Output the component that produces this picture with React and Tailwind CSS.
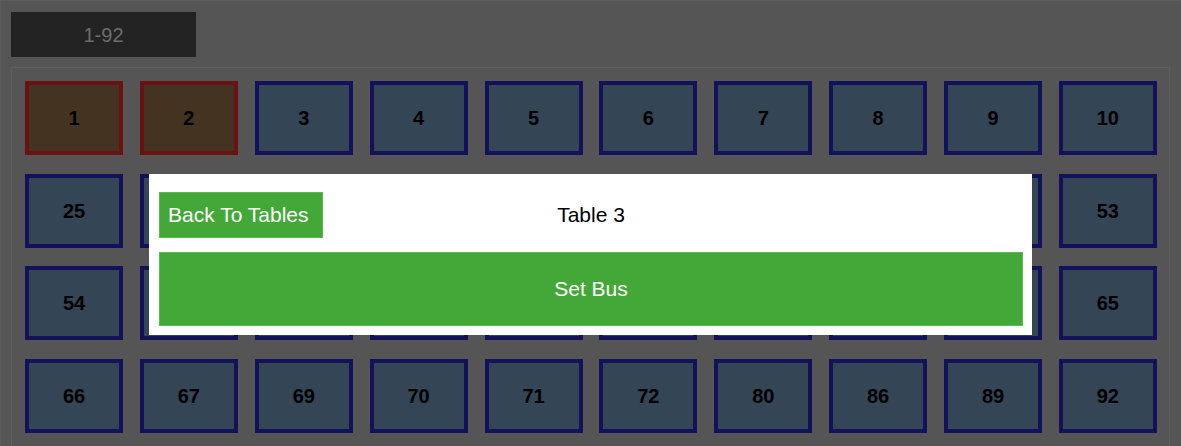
import React from "react";

const rows = [
  [1, 2, 3, 4, 5, 6, 7, 8, 9, 10],
  [25, 26, 27, 28, 29, 30, 31, 32, 33, 53],
  [54, 55, 56, 57, 58, 59, 60, 61, 62, 65],
  [66, 67, 69, 70, 71, 72, 80, 86, 89, 92],
];

// tables that are taken show in red
const busy = [1, 2];

function Tile({ num }) {
  const taken = busy.includes(num);
  return (
    <div
      className={
        "w-[98px] h-[74px] border-4 flex items-center justify-center text-[20px] font-bold text-black " +
        (taken ? "border-[#6a1111] bg-[#453322]" : "border-[#12125a] bg-[#344555]")
      }
    >
      {num}
    </div>
  );
}

export default function App() {
  return (
    <div
      className="relative w-full h-[446px] overflow-hidden bg-[#555555] border-l border-t border-[#5c5c5c]"
      style={{ fontFamily: '"Liberation Sans", Arial, sans-serif' }}
    >
      {/* Range header */}
      <div className="ml-[10px] mt-[11px] w-[185px] h-[45px] bg-[#232323] flex items-center justify-center text-[20px] text-[#6c6c6c]">
        1-92
      </div>

      {/* Tables panel */}
      <div className="ml-[10px] mt-[10px] w-[1159px] h-[400px] border border-[#5d5d5d] pt-[13px] pl-[13px]">
        <div className="w-[1132px] flex flex-col gap-y-[18.7px]">
          {rows.map((row, i) => (
            <div key={i} className="flex justify-between">
              {row.map((n) => (
                <Tile key={n} num={n} />
              ))}
            </div>
          ))}
        </div>
      </div>

      {/* Table dialog */}
      <div className="absolute left-[148px] top-[173px] w-[883px] h-[161px] bg-white pt-[18px] pl-[10px] pr-[9px]">
        <div className="relative h-[46px] flex items-center">
          <button className="h-[46px] w-[164px] bg-[#43a838] border border-[#5cb852] text-white text-[21px] text-left pl-[8px]">
            Back To Tables
          </button>
          <div className="absolute left-0 right-0 text-center text-[21px] text-black pointer-events-none">
            Table 3
          </div>
        </div>
        <button className="mt-[14px] w-full h-[74px] bg-[#43a838] border border-[#5cb852] text-white text-[21px]">
          Set Bus
        </button>
      </div>
    </div>
  );
}
